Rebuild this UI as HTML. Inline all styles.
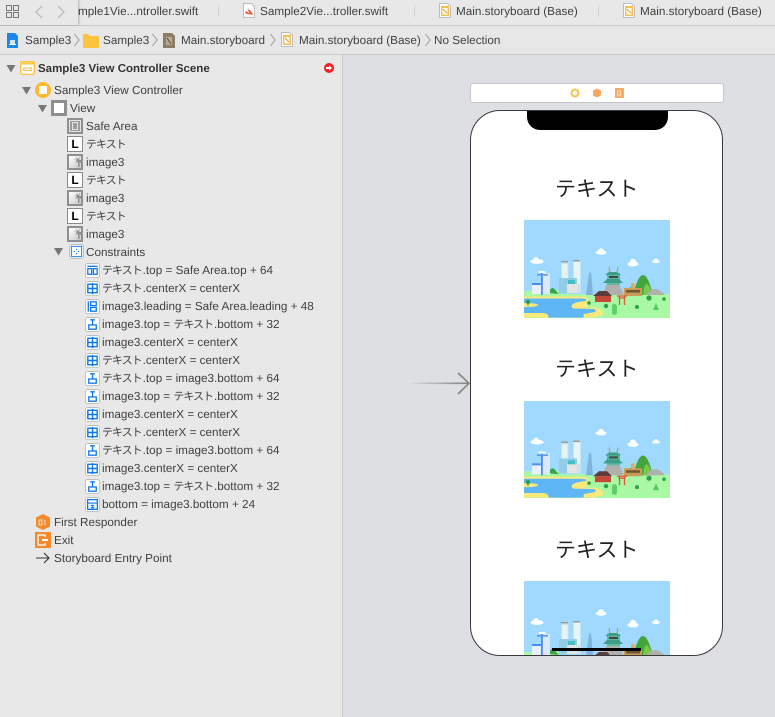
<!DOCTYPE html>
<html><head><meta charset="utf-8"><style>
html,body{margin:0;padding:0;width:775px;height:717px;overflow:hidden;background:#dedfe3}
body{position:relative;font-family:"Liberation Sans","Noto Sans CJK JP",sans-serif;font-size:11.72px;color:#3f3f3f;text-rendering:geometricPrecision}
.a{position:absolute}
.t{position:absolute;white-space:nowrap;line-height:18px;height:18px;margin-top:1px}
.k{font-size:11px;letter-spacing:-1px;margin-right:1px;line-height:0;font-family:"Noto Sans CJK JP",sans-serif}
.i{position:absolute;width:16px;height:16px;overflow:visible}
.c{position:absolute;width:15px;height:15px;left:85px;overflow:visible}
.ph{position:absolute;left:555px;width:82px;text-align:center;font:21px/30px "Noto Sans CJK JP",sans-serif;color:#222;white-space:nowrap}
.L{position:absolute;left:67px;width:14px;height:14px;background:#fff;border:1px solid #8a8a8a;font:bold 12px/14px "Liberation Sans",sans-serif;color:#000;text-align:center}
</style></head><body>
<svg width="0" height="0" style="position:absolute"><defs>
<linearGradient id="ig" x1="0" y1="0" x2="1" y2="1"><stop offset="0" stop-color="#fff"/><stop offset="1" stop-color="#c8c8c8"/></linearGradient>
<symbol id="img" viewBox="0 0 16 16"><rect width="16" height="16" fill="#8f8f93"/><rect x="2" y="2" width="12" height="12" fill="url(#ig)"/><path d="M9 3l1 3-3-1 3 2-2 2 3-1 0 5h1.500l0-5 1.500 1v-3l-2 0 1-3-2 2z" fill="#8d8d8d"/></symbol>
<symbol id="cx" viewBox="0 0 16 16"><rect x=".5" y=".5" width="15" height="15" rx="2.500" fill="#fff" stroke="#bdbdbd"/><rect x="3" y="3.500" width="10" height="9" fill="#fff" stroke="#0a78f0" stroke-width="1.500"/><path d="M8 2v12M3 8h10" stroke="#0a78f0" stroke-width="1.500"/></symbol>
<symbol id="tp" viewBox="0 0 16 16"><rect x=".5" y=".5" width="15" height="15" rx="2.500" fill="#fff" stroke="#bdbdbd"/><path d="M5.500 3h5M8 3v5" stroke="#0a78f0" stroke-width="1.400" fill="none"/><rect x="4" y="8.500" width="8" height="4.500" fill="#fff" stroke="#0a78f0" stroke-width="1.400"/></symbol>
<symbol id="sa" viewBox="0 0 16 16"><rect x=".5" y=".5" width="15" height="15" rx="2.500" fill="#fff" stroke="#bdbdbd"/><path d="M2.500 3.500h11" stroke="#0a78f0" stroke-width="1.400"/><rect x="3" y="6" width="4" height="6" fill="#fff" stroke="#0a78f0" stroke-width="1.400"/><rect x="9" y="6" width="4" height="6" fill="#fff" stroke="#0a78f0" stroke-width="1.400"/></symbol>
<symbol id="ld" viewBox="0 0 16 16"><rect x=".5" y=".5" width="15" height="15" rx="2.500" fill="#fff" stroke="#bdbdbd"/><path d="M3.500 2.500v11" stroke="#0a78f0" stroke-width="1.400"/><rect x="6" y="3" width="6" height="4" fill="#fff" stroke="#0a78f0" stroke-width="1.400"/><rect x="6" y="9" width="6" height="4" fill="#fff" stroke="#0a78f0" stroke-width="1.400"/></symbol>
<symbol id="bt" viewBox="0 0 16 16"><rect x=".5" y=".5" width="15" height="15" rx="2.500" fill="#fff" stroke="#bdbdbd"/><rect x="2.800" y="2.800" width="10.400" height="10.400" fill="#fff" stroke="#0a78f0" stroke-width="1.400"/><path d="M3 6.500h10M6 9h4M6 11.500h4M8 9v3" stroke="#0a78f0" stroke-width="1.200"/></symbol>
<symbol id="sb" viewBox="0 0 12 15"><path d="M.5.5h8l3 3v11H.5z" fill="#fbfbfb" stroke="#bdbdbd"/><rect x="2" y="3" width="8" height="10" fill="#f5c04f"/><rect x="3.500" y="5" width="5" height="6.500" fill="#fff"/><path d="M4 6l4 4" stroke="#d99a20"/></symbol>
<symbol id="art" viewBox="0 0 146 98" preserveAspectRatio="none">
<rect width="146" height="98" fill="#9fd9ff"/>
<g fill="#fff"><ellipse cx="13" cy="41.500" rx="6.500" ry="2.400"/><circle cx="12" cy="39.800" r="2.800"/><ellipse cx="77" cy="32.500" rx="5.500" ry="2.200"/><circle cx="77" cy="30.800" r="2.700"/><ellipse cx="109" cy="44" rx="5.500" ry="2.400"/><circle cx="109" cy="41.800" r="3"/><ellipse cx="132" cy="41.500" rx="4" ry="1.600"/><circle cx="132" cy="40.500" r="2"/></g>
<rect y="71" width="35" height="4" fill="#a8f8a4"/><rect y="74" width="146" height="24" fill="#a8f8a4"/>
<path d="M24 73q4-9 8-2l3 3z" fill="#3aa548"/>
<path d="M100 75q5-12 12-5l-1 5z" fill="#3a9a3e"/><path d="M109 75Q119 35 129 75z" fill="#43a63c"/><path d="M119 75q2-22 10 0z" fill="#7ac74a"/>
<path d="M122 75q9-12 19 0z" fill="#b0b0ae"/>
<rect x="8" y="64" width="18" height="10" fill="#e8f1fb"/><rect x="19" y="53" width="7" height="21" fill="#dce9f8"/><rect x="17" y="52" width="1.800" height="23" fill="#4c8df2"/><rect x="13" y="54" width="11" height="1.600" fill="#5a98f0"/><rect x="8" y="63" width="9" height="2" fill="#4c8df2"/><ellipse cx="18" cy="52" rx="4" ry="1" fill="#fff"/>
<rect x="37" y="42" width="7.500" height="31" fill="#c8e4f0"/><rect x="38" y="44" width="5.500" height="20" fill="#e6f4f6"/><rect x="37" y="41" width="7" height="1.400" fill="#999"/>
<rect x="49" y="40" width="8" height="33" fill="#c8e4f0"/><rect x="50" y="42" width="6" height="22" fill="#e6f4f6"/><rect x="49" y="40" width="7" height="1.400" fill="#999"/>
<rect x="35" y="58" width="18" height="15" fill="#92cde6"/><rect x="44" y="60" width="7" height="4" fill="#44bcc8"/><rect x="43" y="64" width="10" height="9" fill="#e4e4e4"/>
<path d="M62 75l3-22 2-1 2 23z" fill="#7fb3da"/>
<path d="M78 75l6-13h10l6 13z" fill="#b2b0ac"/><rect x="83" y="53" width="13" height="12" fill="#5db9a0"/><path d="M79 63h20l-4-4H83zM81 55h16l-4-3h-8z" fill="#3f9f86"/><rect x="85" y="56" width="9" height="2" fill="#444"/><path d="M85 47l1 5M94 47l-1 5" stroke="#c9963a"/>
<rect x="100" y="68" width="18" height="8" fill="#c89c55"/><rect x="107" y="63" width="3.500" height="6" fill="#e0ad55"/><rect x="102" y="70" width="14" height="2.500" fill="#6d5535"/>
<path d="M69 76l6-5h8l5 5z" fill="#5c3c3c"/><rect x="71" y="76" width="16" height="6" fill="#c4473a"/>
<path d="M93 76h10M94.500 78h7M95.500 76v9M100.500 76v9" stroke="#e2563c" stroke-width="1.300" fill="none"/>
<path d="M0 76.500H60Q67 78 64 83Q66 86 60 87.500Q68 88 72 87.500Q80 90 79 95L70 97.500H0z" fill="#fbe97c"/>
<path d="M0 78.500H58Q64 79 62 81Q50 82 48 85Q47 88 50 88.500L70 89Q73 90 71 92L60 94Q59 96 60 97.500H25Q24 93 19 93H0V87Q14 87 14 85Q13 83 0 83z" fill="#5fb6f5"/>
<g fill="#2f9f4a"><circle cx="4" cy="82" r="2.200"/><rect x="3.500" y="83" width="1" height="3"/><circle cx="65" cy="83" r="1.800"/><circle cx="82" cy="86" r="2.200"/><circle cx="113" cy="87" r="2"/><circle cx="125" cy="78" r="2.600"/><path d="M129 90l3-7 3 7z" fill="#55c86a"/><circle cx="140" cy="79" r="1.800"/></g>
<rect x="88" y="84" width="5" height="11" rx="2.500" fill="#5fcf6a"/>
</symbol>
</defs></svg>

<!-- tab bar -->
<div class="a" style="left:0;top:0;width:775px;height:25px;background:#e8e8e8;border-bottom:1px solid #c9c9c9"></div>
<div class="t" style="left:78px;top:2px">mple1Vie...ntroller.swift</div>
<div class="t" style="left:260px;top:2px">Sample2Vie...troller.swift</div>
<div class="t" style="left:456px;top:2px">Main.storyboard (Base)</div>
<div class="t" style="left:640px;top:2px">Main.storyboard (Base)</div>
<div class="a" style="left:218px;top:5px;width:1px;height:12px;background:#d2d2d2"></div>
<div class="a" style="left:414px;top:5px;width:1px;height:12px;background:#d2d2d2"></div>
<div class="a" style="left:598px;top:5px;width:1px;height:12px;background:#d2d2d2"></div>
<svg class="a" style="left:243px;top:3px" width="12" height="15" viewBox="0 0 12 15"><path d="M.5.5h8l3 3v11H.5z" fill="#fbfbfb" stroke="#bdbdbd"/><path d="M2.500 8q3 2 5 3-3 1-5-1zM5 6q3 2 4 4 1 1 .5 2-1-.5-2-.5-2-2-2.500-5.500z" fill="#ee4a2a"/></svg>
<svg class="a" style="left:439px;top:3px" width="12" height="15"><use href="#sb"/></svg>
<svg class="a" style="left:623px;top:3px" width="12" height="15"><use href="#sb"/></svg>
<!-- nav overlay -->
<div class="a" style="left:0;top:0;width:78px;height:25px;background:#e8e8e8;box-shadow:1px 0 2px rgba(0,0,0,.25)"></div>
<svg class="a" style="left:5px;top:4px" width="15" height="15" fill="none" stroke="#777"><rect x="1.500" y="1.500" width="5" height="5"/><rect x="8.500" y="1.500" width="5" height="5"/><rect x="1.500" y="8.500" width="5" height="5"/><rect x="8.500" y="8.500" width="5" height="5"/></svg>
<svg class="a" style="left:34px;top:4px" width="32" height="15" fill="none" stroke="#bcbcbc" stroke-width="1.300"><path d="M8 2L2 8l6 6M24 2l6 6-6 6"/></svg>

<!-- breadcrumb -->
<div class="a" style="left:0;top:26px;width:775px;height:28px;background:#e7e7e7;border-bottom:1px solid #c9c9c9"></div>
<svg class="a" style="left:7px;top:33px" width="11" height="15" viewBox="0 0 11 15"><path d="M0 0h8l3 3v12H0z" fill="#1a87ee"/><rect x="3" y="7" width="5" height="4" fill="#cfe6fc"/><rect x="2" y="11" width="7" height="1" fill="#fff"/></svg>
<svg class="a" style="left:83px;top:33px" width="16" height="15" viewBox="0 0 16 15"><path d="M0 2q0-1 1-1h4l2 2h8q1 0 1 1v10q0 1-1 1H1q-1 0-1-1z" fill="#fcc33c"/></svg>
<svg class="a" style="left:163px;top:32px" width="12" height="16" viewBox="0 0 12 16"><path d="M0 1h9l3 3v12H0z" fill="#8d7f66"/><rect x="3" y="5" width="6" height="8" fill="#b9ad95"/><path d="M4 6l4 6" stroke="#4f4636"/></svg>
<svg class="a" style="left:281px;top:32px" width="12" height="15"><use href="#sb"/></svg>
<div class="t" style="left:25px;top:31px">Sample3</div>
<div class="t" style="left:103px;top:31px">Sample3</div>
<div class="t" style="left:181px;top:31px">Main.storyboard</div>
<div class="t" style="left:299px;top:31px">Main.storyboard (Base)</div>
<div class="t" style="left:434px;top:31px">No Selection</div>
<svg class="a" style="left:0;top:32px" width="440" height="16" fill="none" stroke="#9a9a9a"><path d="M74.500 2l4.500 6-4.500 6M152.500 2l4.500 6-4.500 6M270.500 2l4.500 6-4.500 6M425.500 2l4.500 6-4.500 6"/></svg>

<!-- left pane -->
<div class="a" style="left:0;top:55px;width:342px;height:662px;background:#e8e8e8;border-right:1px solid #c8c8c8"></div>
<svg class="a" style="left:0;top:55px" width="80" height="215" fill="#777"><path d="M6.500 10h9l-4.500 7.500zM22 32h9l-4.500 7.500zM38 50h9l-4.500 7.500zM54 193h9l-4.500 7.500z"/></svg>
<svg class="a" style="left:20px;top:61px" width="15" height="14" viewBox="0 0 16 16" preserveAspectRatio="none"><rect width="16" height="16" rx="2" fill="#fcc33c"/><rect x="1.500" y="4" width="13" height="10.500" fill="#fff"/><path d="M2 2h1M5 2h1M8 2h1M11 2h1" stroke="#fff"/><rect x="4" y="8" width="8" height="3" fill="#fff" stroke="#f0b030"/></svg>
<div class="t" style="left:38px;top:59px;font-weight:bold;font-size:11.500px;color:#333">Sample3 View Controller Scene</div>
<svg class="a" style="left:324px;top:63px" width="10" height="10"><circle cx="5" cy="5" r="5" fill="#f01f1f"/><path d="M2 4h3V2l3 3-3 3V6H2z" fill="#fff"/></svg>
<svg class="a" style="left:35px;top:82px" width="16" height="16"><circle cx="8" cy="8" r="8" fill="#fdb92e"/><rect x="4" y="4" width="8" height="8" fill="#fff"/></svg>
<div class="t" style="left:54px;top:81px">Sample3 View Controller</div>
<svg class="a" style="left:51px;top:100px" width="16" height="16"><rect width="16" height="16" fill="#8f8f93"/><rect x="3" y="3" width="10" height="10" fill="#fff"/></svg>
<div class="t" style="left:70px;top:99px">View</div>
<svg class="a" style="left:67px;top:118px" width="16" height="16"><rect width="16" height="16" fill="#8f8f93"/><rect x="2.500" y="2.500" width="11" height="11" fill="#9c9c9f" stroke="#e4e4e4"/><rect x="5.500" y="4.500" width="5" height="7" fill="none" stroke="#e4e4e4"/></svg>
<div class="t" style="left:86px;top:117px">Safe Area</div>
<div class="L" style="top:136px">L</div><div class="t" style="left:86px;top:135px"><span class="k">テキスト</span></div>
<svg class="i" style="left:67px;top:154px"><use href="#img"/></svg><div class="t" style="left:86px;top:153px">image3</div>
<div class="L" style="top:172px">L</div><div class="t" style="left:86px;top:171px"><span class="k">テキスト</span></div>
<svg class="i" style="left:67px;top:190px"><use href="#img"/></svg><div class="t" style="left:86px;top:189px">image3</div>
<div class="L" style="top:208px">L</div><div class="t" style="left:86px;top:207px"><span class="k">テキスト</span></div>
<svg class="i" style="left:67px;top:226px"><use href="#img"/></svg><div class="t" style="left:86px;top:225px">image3</div>
<svg class="c" style="left:69px;top:244px" viewBox="0 0 16 16"><rect x=".5" y=".5" width="15" height="15" rx="2.500" fill="#fff" stroke="#bdbdbd"/><rect x="2.500" y="2.500" width="11" height="11" fill="none" stroke="#0a78f0"/><path d="M8 5v1.500M8 9.500V11M5 8h1.500M9.500 8H11" stroke="#0a78f0"/></svg>
<div class="t" style="left:86px;top:243px">Constraints</div>

<svg class="c" style="top:263px"><use href="#sa"/></svg><div class="t" style="left:102px;top:261px"><span class="k">テキスト</span>.top = Safe Area.top + 64</div>
<svg class="c" style="top:281px"><use href="#cx"/></svg><div class="t" style="left:102px;top:279px"><span class="k">テキスト</span>.centerX = centerX</div>
<svg class="c" style="top:299px"><use href="#ld"/></svg><div class="t" style="left:102px;top:297px">image3.leading = Safe Area.leading + 48</div>
<svg class="c" style="top:317px"><use href="#tp"/></svg><div class="t" style="left:102px;top:315px">image3.top = <span class="k">テキスト</span>.bottom + 32</div>
<svg class="c" style="top:335px"><use href="#cx"/></svg><div class="t" style="left:102px;top:333px">image3.centerX = centerX</div>
<svg class="c" style="top:353px"><use href="#cx"/></svg><div class="t" style="left:102px;top:351px"><span class="k">テキスト</span>.centerX = centerX</div>
<svg class="c" style="top:371px"><use href="#tp"/></svg><div class="t" style="left:102px;top:369px"><span class="k">テキスト</span>.top = image3.bottom + 64</div>
<svg class="c" style="top:389px"><use href="#tp"/></svg><div class="t" style="left:102px;top:387px">image3.top = <span class="k">テキスト</span>.bottom + 32</div>
<svg class="c" style="top:407px"><use href="#cx"/></svg><div class="t" style="left:102px;top:405px">image3.centerX = centerX</div>
<svg class="c" style="top:425px"><use href="#cx"/></svg><div class="t" style="left:102px;top:423px"><span class="k">テキスト</span>.centerX = centerX</div>
<svg class="c" style="top:443px"><use href="#tp"/></svg><div class="t" style="left:102px;top:441px"><span class="k">テキスト</span>.top = image3.bottom + 64</div>
<svg class="c" style="top:461px"><use href="#cx"/></svg><div class="t" style="left:102px;top:459px">image3.centerX = centerX</div>
<svg class="c" style="top:479px"><use href="#tp"/></svg><div class="t" style="left:102px;top:477px">image3.top = <span class="k">テキスト</span>.bottom + 32</div>
<svg class="c" style="top:497px"><use href="#bt"/></svg><div class="t" style="left:102px;top:495px">bottom = image3.bottom + 24</div>

<svg class="a" style="left:35px;top:514px" width="16" height="16" viewBox="0 0 16 16"><path d="M8 0l7 3.500v9L8 16l-7-3.500v-9z" fill="#f58a2c"/><path d="M4 6h3v5H4zM10 6v5" fill="none" stroke="#fde0bf"/></svg>
<div class="t" style="left:54px;top:513px">First Responder</div>
<svg class="a" style="left:35px;top:532px" width="16" height="16" viewBox="0 0 16 16"><rect width="16" height="16" fill="#f58a2c"/><path d="M10 5V3H3v10h7v-2" fill="none" stroke="#fff" stroke-width="1.300"/><path d="M7 8h6" stroke="#fff" stroke-width="2"/></svg>
<div class="t" style="left:54px;top:531px">Exit</div>
<svg class="a" style="left:36px;top:552px" width="14" height="12" fill="none" stroke="#333" stroke-width="1.100"><path d="M0 6h13M8 1l5 5-5 5"/></svg>
<div class="t" style="left:54px;top:549px">Storyboard Entry Point</div>

<!-- canvas -->
<div class="a" style="left:470px;top:83px;width:252px;height:18px;background:#fff;border:1px solid #c6c6c8;border-radius:3px"></div>
<svg class="a" style="left:570px;top:88px" width="56" height="10"><circle cx="5" cy="5" r="3.500" fill="#fff" stroke="#fdc04a" stroke-width="2"/><path d="M27 .5l4 2v5l-4 2-4-2v-5z" fill="#f7a65e"/><rect x="45" y="0" width="9" height="10" fill="#f9ad64"/><rect x="47.500" y="3" width="3" height="4" fill="none" stroke="#fde0bf"/></svg>
<svg class="a" style="left:405px;top:370px" width="66" height="26" fill="none"><defs><linearGradient id="g" x1="0" x2="1" y1="0" y2="0"><stop offset="0" stop-color="#dedfe3"/><stop offset="1" stop-color="#7f7f7f"/></linearGradient></defs><rect x="4" y="12.500" width="60" height="1.600" fill="url(#g)"/><path d="M53 3l11 10.300L53 24" stroke="#858585" stroke-width="1.600"/></svg>

<div class="a" style="left:470px;top:110px;width:251px;height:544px;background:#fff;border:1px solid #3a3a3a;border-radius:30px;overflow:hidden">
  <svg class="a" style="left:53px;top:109px;filter:blur(.35px)" width="146" height="98"><use href="#art"/></svg>
  <svg class="a" style="left:53px;top:290px;filter:blur(.35px)" width="146" height="97"><use href="#art"/></svg>
  <svg class="a" style="left:53px;top:470px;filter:blur(.35px)" width="146" height="98"><use href="#art"/></svg>
  <div class="a" style="left:56px;top:-1px;width:141px;height:20px;background:#000;border-radius:0 0 13px 13px"></div>
  <div class="a" style="left:81px;top:537px;width:89px;height:3px;background:#000"></div>
</div>
<div class="ph" style="top:173px">テキスト</div>
<div class="ph" style="top:353px">テキスト</div>
<div class="ph" style="top:534px">テキスト</div>
</body></html>
